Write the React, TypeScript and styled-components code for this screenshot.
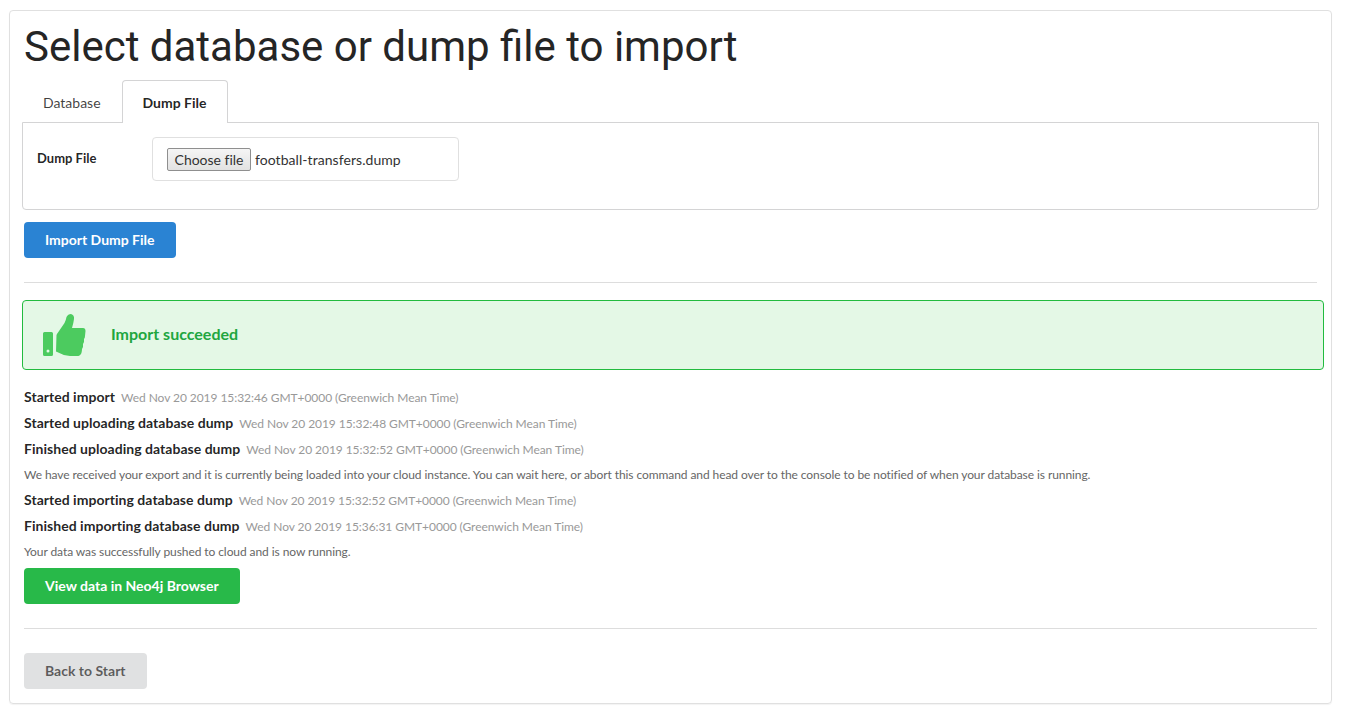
import React from "react";
import styled, { createGlobalStyle } from "styled-components";

const GlobalStyle = createGlobalStyle`
  html, body {
    margin: 0;
    padding: 0;
    background: #fff;
    font-family: "Lato", "Helvetica Neue", Arial, sans-serif;
    font-size: 14px;
    line-height: 20px;
    color: rgba(0, 0, 0, 0.87);
  }
`;

const Page = styled.div`
  padding: 10px 13px 15px 9px;
`;

const Card = styled.div`
  display: flex;
  flex-direction: column;
  box-sizing: border-box;
  height: 694px;
  padding: 0 14px;
  border: 1px solid #e0e0e0;
  border-radius: 4px;
  box-shadow: 0 1px 1px rgba(0, 0, 0, 0.05);
`;

const Title = styled.h1`
  margin: 12px 0 9px;
  font-family: "Roboto", sans-serif;
  font-size: 42px;
  font-weight: 400;
  line-height: 48px;
  color: #252525;
`;

const TabBar = styled.div`
  display: flex;
  margin: 0 -2px;
  height: 43px;
  position: relative;
  z-index: 1;
`;

const Tab = styled.div<{ $active?: boolean }>`
  box-sizing: border-box;
  height: 43px;
  padding: 12px 20px 0;
  margin-bottom: -1px;
  border: 1px solid ${({ $active }) => ($active ? "#d4d4d5" : "transparent")};
  border-bottom: none;
  border-radius: 4px 4px 0 0;
  background: ${({ $active }) => ($active ? "#fff" : "transparent")};
  font-weight: ${({ $active }) => ($active ? 700 : 400)};
  color: ${({ $active }) => ($active ? "rgba(0,0,0,.87)" : "rgba(0,0,0,.75)")};
`;

const TabPanel = styled.div`
  display: flex;
  box-sizing: border-box;
  height: 88px;
  margin: -1px -2px 0 -2px;
  padding: 14px;
  border: 1px solid #d4d4d5;
  border-radius: 0 0 4px 4px;
`;

const FieldLabel = styled.label`
  width: 115px;
  margin-top: 11px;
  font-size: 13px;
  font-weight: 700;
`;

const FileBox = styled.div`
  display: flex;
  align-items: center;
  box-sizing: border-box;
  width: 307px;
  height: 44px;
  padding: 0 14px;
  border: 1px solid #e0e0e0;
  border-radius: 4px;
  font-size: 14px;
`;

const ChooseButton = styled.button`
  box-sizing: border-box;
  height: 23px;
  width: 84px;
  padding: 0;
  margin-right: 4px;
  background: linear-gradient(#f5f5f5, #e2e2e2);
  border: 1px solid #8f8f8f;
  border-radius: 2px;
  font-family: inherit;
  font-size: 14px;
  letter-spacing: -0.02px;
  color: #333;
`;

const FileName = styled.span`
  padding-top: 2px;
  letter-spacing: 0.06px;
  color: #333;
`;

const ActionButton = styled.button<{ $kind: "primary" | "success" | "muted" }>`
  display: block;
  align-self: flex-start;
  box-sizing: border-box;
  height: 36px;
  padding: 0 21px 1px;
  border: none;
  border-radius: 4px;
  font-family: inherit;
  font-size: 14px;
  font-weight: 700;
  color: ${({ $kind }) => ($kind === "muted" ? "rgba(0,0,0,.6)" : "#fff")};
  background: ${({ $kind }) =>
    $kind === "primary" ? "#2a83d3" : $kind === "success" ? "#28b949" : "#e0e1e2"};
`;

const ImportButton = styled(ActionButton)`
  margin-top: 12px;
`;

const Divider = styled.hr`
  width: 100%;
  margin: 0;
  border: none;
  border-top: 1px solid #ddd;
`;

const TopDivider = styled(Divider)`
  margin-top: 24px;
`;

const BottomDivider = styled(Divider)`
  margin-top: 24px;
`;

const SuccessBox = styled.div`
  display: flex;
  align-items: center;
  gap: 25px;
  box-sizing: border-box;
  height: 70px;
  margin: 17px -7px 0 -2px;
  padding: 0 20px;
  background: #e4f8e6;
  border: 1px solid #22bb3f;
  border-radius: 4px;
`;

const SuccessText = styled.span`
  padding-bottom: 2px;
  font-size: 16px;
  font-weight: 700;
  color: #21a63f;
`;

const LogList = styled.div`
  display: flex;
  flex-direction: column;
  margin-top: 17px;
`;

const LogRow = styled.div`
  height: 25.75px;
  line-height: 20px;
  white-space: nowrap;
`;

const LogTitle = styled.strong`
  font-weight: 700;
  letter-spacing: 0.03px;
  margin-right: 6px;
`;

const LogTime = styled.span`
  font-size: 12px;
  letter-spacing: -0.06px;
  color: #999;
`;

const LogNote = styled.div`
  height: 25.5px;
  font-size: 12px;
  letter-spacing: -0.078px;
  line-height: 22px;
  color: #666;
  white-space: nowrap;
`;

const BrowserButton = styled(ActionButton)`
  margin-top: 1px;
`;

const BackButton = styled(ActionButton)`
  margin-top: 24px;
`;

const ThumbIcon = () => (
  <svg width="43" height="42" viewBox="0 0 43 42" fill="#4ccb5f">
    <path
      fillRule="evenodd"
      d="M1.500 18h7A1.500 1.500 0 0 1 10 19.500v21A1.500 1.500 0 0 1 8.500 42h-7A1.500 1.500 0 0 1 0 40.500v-21A1.500 1.500 0 0 1 1.500 18ZM5 35.500a1.500 1.500 0 1 0 0 3a1.500 1.500 0 1 0 0-3Z"
    />
    <path d="M13 37.500L13.500 21Q14 19.500 15 18.500L21.500 9Q23 6 23.500 3Q25 0 28 0Q31.500 1 31 5Q30.500 9 29 14L40 14Q42.500 14 42.500 17L42 22Q42 24 41 25Q41.500 28 40 30Q40.500 33 39 35Q39 40 36.500 41.500Q35.500 42 34 42L27 42Q20 41.500 13 37.500Z" />
  </svg>
);

const LOG_BEFORE = [
  ["Started import", "Wed Nov 20 2019 15:32:46 GMT+0000 (Greenwich Mean Time)"],
  ["Started uploading database dump", "Wed Nov 20 2019 15:32:48 GMT+0000 (Greenwich Mean Time)"],
  ["Finished uploading database dump", "Wed Nov 20 2019 15:32:52 GMT+0000 (Greenwich Mean Time)"],
];

const LOG_AFTER = [
  ["Started importing database dump", "Wed Nov 20 2019 15:32:52 GMT+0000 (Greenwich Mean Time)"],
  ["Finished importing database dump", "Wed Nov 20 2019 15:36:31 GMT+0000 (Greenwich Mean Time)"],
];

const renderRows = (rows: string[][]) =>
  rows.map(([title, time]) => (
    <LogRow key={title}>
      <LogTitle>{title}</LogTitle>
      <LogTime>{time}</LogTime>
    </LogRow>
  ));

export default function App() {
  return (
    <Page>
      <GlobalStyle />
      <Card>
        <Title>Select database or dump file to import</Title>
        <TabBar>
          <Tab>Database</Tab>
          <Tab $active>Dump File</Tab>
        </TabBar>
        <TabPanel>
          <FieldLabel>Dump File</FieldLabel>
          <FileBox>
            <ChooseButton type="button">Choose file</ChooseButton>
            <FileName>football-transfers.dump</FileName>
          </FileBox>
        </TabPanel>
        <ImportButton $kind="primary">Import Dump File</ImportButton>
        <TopDivider />
        <SuccessBox>
          <ThumbIcon />
          <SuccessText>Import succeeded</SuccessText>
        </SuccessBox>
        <LogList>
          {renderRows(LOG_BEFORE)}
          <LogNote>
            We have received your export and it is currently being loaded into your cloud instance. You can wait here, or abort this command and head over to the console to be notified of when your database is running.
          </LogNote>
          {renderRows(LOG_AFTER)}
          <LogNote>Your data was successfully pushed to cloud and is now running.</LogNote>
        </LogList>
        <BrowserButton $kind="success">View data in Neo4j Browser</BrowserButton>
        <BottomDivider />
        <BackButton $kind="muted">Back to Start</BackButton>
      </Card>
    </Page>
  );
}
